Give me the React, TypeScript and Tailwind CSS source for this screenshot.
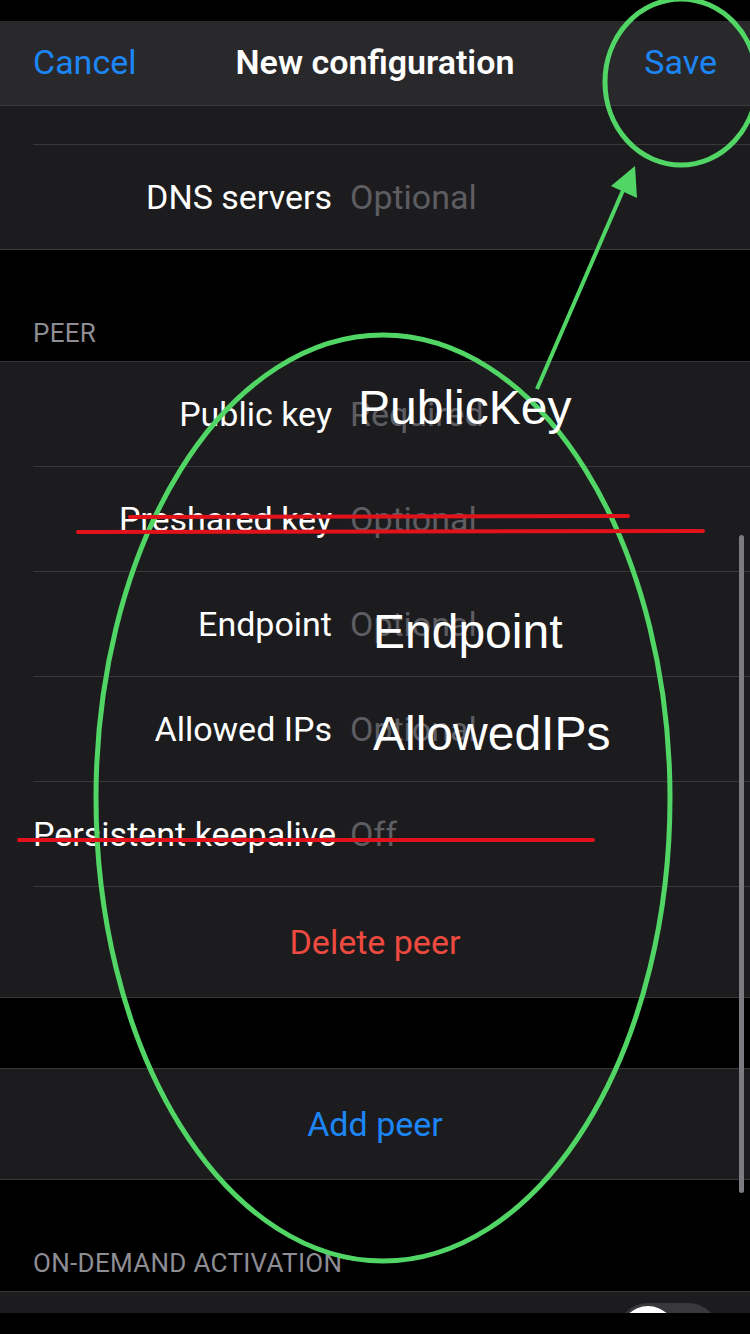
import React from "react";

const ui = { fontFamily: "Roboto, 'Liberation Sans', sans-serif" };
const marker = { fontFamily: "'Liberation Sans', Arial, sans-serif" };

type FieldRowProps = {
  label: string;
  value: string;
  last?: boolean;
};

const FieldRow = ({ label, value, last }: FieldRowProps) => (
  <div className="bg-[#1c1c1e] pl-[33px]">
    <div
      className={`h-[105px] flex items-center ${
        last ? "" : "border-b border-[#38383a]"
      }`}
    >
      <span className="w-[299px] flex-none text-right whitespace-nowrap text-[34px] text-white">
        {label}
      </span>
      <span className="ml-[18px] whitespace-nowrap text-[34px] text-[#5d5d62]">
        {value}
      </span>
    </div>
  </div>
);

const SectionHeader = ({ title, h }: { title?: string; h: string }) => (
  <div className={`${h} flex items-end px-[33px] pb-[12px]`}>
    {title && (
      <span className="text-[26px] leading-[31px] text-[#8d8d93] uppercase tracking-[0.3px]">
        {title}
      </span>
    )}
  </div>
);

// annotations drawn over the screenshot
const Annotations = () => (
  <>
    <svg
      className="absolute left-0 top-0 pointer-events-none"
      width={750}
      height={1334}
      viewBox="0 0 750 1334"
    >
      <ellipse cx={681} cy={82} rx={76} ry={83} fill="none" stroke="#51d665" strokeWidth={5} />
      <ellipse cx={383} cy={798} rx={287} ry={463} fill="none" stroke="#51d665" strokeWidth={5} />
      <line x1={537} y1={389} x2={624} y2={188} stroke="#51d665" strokeWidth={4} />
      <polygon points="635,166 611,186 637,198" fill="#51d665" />
      <line x1={130} y1={517} x2={628} y2={516} stroke="#e2121b" strokeWidth={4} strokeLinecap="round" />
      <line x1={78} y1={532} x2={703} y2={531} stroke="#e2121b" strokeWidth={4} strokeLinecap="round" />
      <line x1={19} y1={840} x2={593} y2={840} stroke="#e2121b" strokeWidth={4} strokeLinecap="round" />
    </svg>
    <div style={marker} className="absolute left-[358px] top-[384px] text-[48px] leading-[48px] text-white whitespace-nowrap">
      PublicKey
    </div>
    <div style={marker} className="absolute left-[373px] top-[608px] text-[48px] leading-[48px] text-white whitespace-nowrap">
      Endpoint
    </div>
    <div style={marker} className="absolute left-[373px] top-[710px] text-[48px] leading-[48px] text-white whitespace-nowrap">
      AllowedIPs
    </div>
  </>
);

export default function App() {
  return (
    <div style={ui} className="relative w-[750px] h-[1334px] overflow-hidden bg-black">
      <div className="h-[21px] bg-black" />
      <div className="h-[85px] bg-[#29292b] border-b border-[#3a3a3c] grid grid-cols-[1fr_auto_1fr] items-center px-[33px]">
        <span className="text-[34px] leading-[40px] pb-[2px] text-[#1c86f7] justify-self-start">Cancel</span>
        <span className="text-[34px] leading-[40px] pb-[2px] font-semibold text-white">New configuration</span>
        <span className="text-[34px] leading-[40px] pb-[2px] text-[#1c86f7] justify-self-end">Save</span>
      </div>

      <div className="h-[1207px] overflow-hidden">
        {/* interface section, scrolled */}
        <div className="border-b border-[#38383a]">
          <div className="bg-[#1c1c1e] pl-[33px]">
            <div className="h-[39px] border-b border-[#38383a]" />
          </div>
          <div className="bg-[#1c1c1e] pl-[33px]">
            <div className="h-[104px] flex items-center">
              <span className="w-[299px] flex-none text-right text-[34px] text-white">DNS servers</span>
              <span className="ml-[18px] text-[34px] text-[#5d5d62]">Optional</span>
            </div>
          </div>
        </div>

        <SectionHeader title="Peer" h="h-[111px]" />
        <div className="border-y border-[#38383a]">
          <FieldRow label="Public key" value="Required" />
          <FieldRow label="Preshared key" value="Optional" />
          <FieldRow label="Endpoint" value="Optional" />
          <FieldRow label="Allowed IPs" value="Optional" />
          <FieldRow label="Persistent keepalive" value="Off" />
          <div className="bg-[#1c1c1e] h-[110px] flex items-center justify-center">
            <span className="text-[34px] text-[#ef4a3f]">Delete peer</span>
          </div>
        </div>

        <div className="h-[70px]" />
        <div className="border-y border-[#38383a] bg-[#1c1c1e] h-[112px] flex items-center justify-center">
          <span className="text-[34px] text-[#1c86f7]">Add peer</span>
        </div>

        <SectionHeader title="On-demand activation" h="h-[111px]" />
        <div className="border-t border-[#38383a] bg-[#1c1c1e] h-[105px] flex justify-end pr-[31px]">
          <div className="mt-[11px] w-[102px] h-[62px] rounded-full bg-[#39393d] p-[3px]">
            <div className="w-[56px] h-[56px] rounded-full bg-white" />
          </div>
        </div>
      </div>
      <div className="h-[21px] bg-black" />

      {/* scroll indicator */}
      <div className="absolute left-[739px] top-[535px] w-[5px] h-[658px] rounded-full bg-[#7c7c80]" />

      <Annotations />
    </div>
  );
}
